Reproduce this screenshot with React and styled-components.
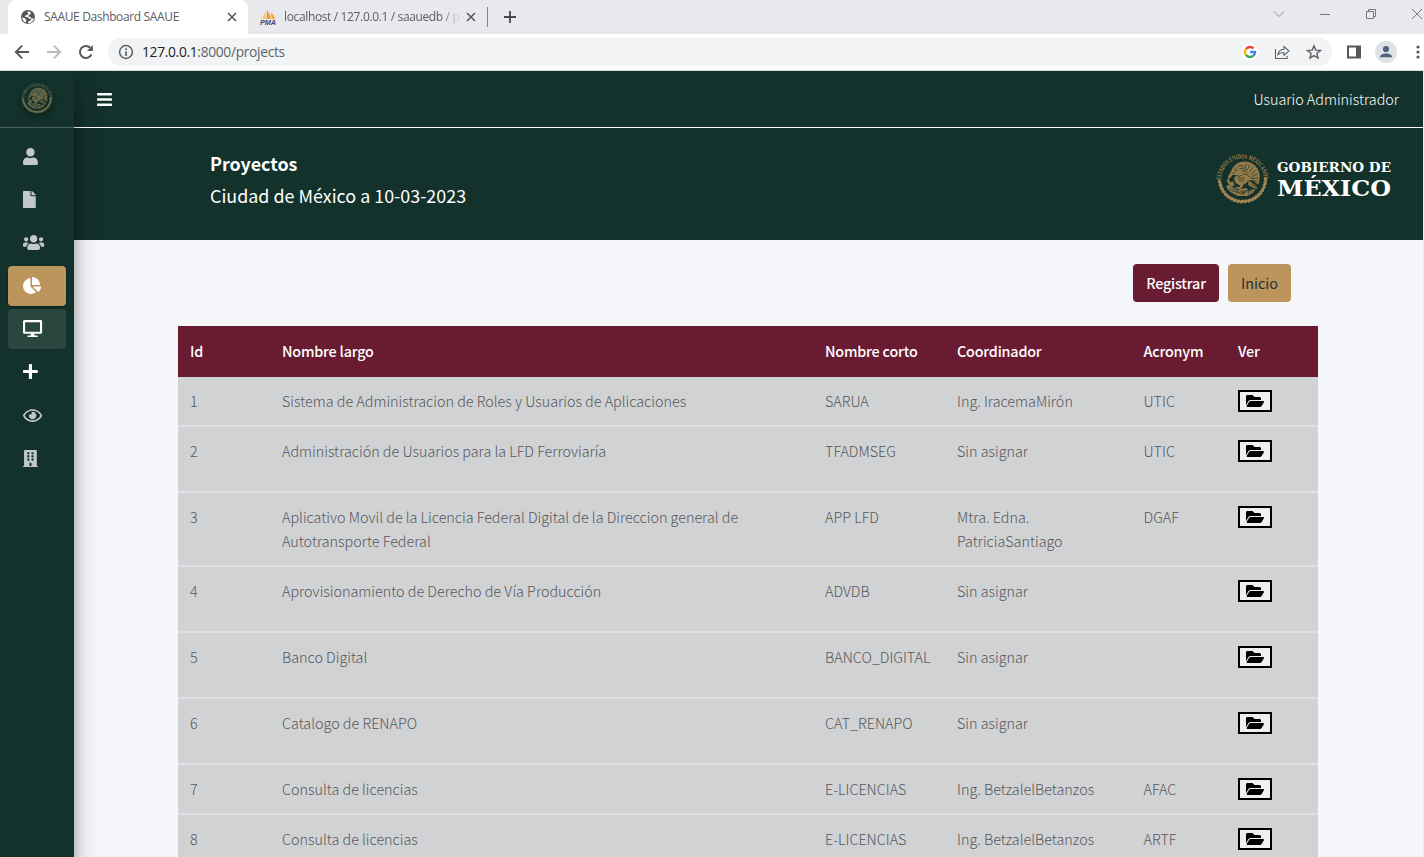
import React from "react";
import styled, { createGlobalStyle } from "styled-components";
import {
  FaUser, FaFile, FaUsers, FaChartPie, FaDesktop, FaPlus, FaRegEye,
  FaBuilding, FaBars, FaFolderOpen,
} from "react-icons/fa";

const green = "#13322b";
const wine = "#691b31";
const gold = "#bc955c";

const Global = createGlobalStyle`
  *, *::before, *::after { box-sizing: border-box; }
  html, body { margin: 0; padding: 0; height: 857px; overflow: hidden; background: #f4f6f9; }
  body { font-family: "Noto Sans CJK SC", "Noto Sans", sans-serif; font-size: 14.35px; font-weight: 300; line-height: 24px; color: #212529; }
  button { font: inherit; border: 0; padding: 0; margin: 0; background: none; color: inherit; }
`;

const Window = styled.div`
  width: 1424px;
  height: 857px;
  display: flex;
  flex-direction: column;
  overflow: hidden;
`;

/* ---------- browser chrome ---------- */
const TabStrip = styled.div`
  height: 34px;
  flex: none;
  display: flex;
  background: #e8e9ed;
  font-family: "Open Sans", sans-serif;
  font-weight: 400;
  font-size: 12px;
  color: #5a5d62;
  padding-left: 8px;
`;
const Tab = styled.div`
  width: ${(p) => p.$w}px;
  height: 34px;
  display: flex;
  align-items: center;
  padding: 0 10px 0 12px;
  background: ${(p) => (p.$active ? "#fff" : "transparent")};
  border-radius: 8px 8px 0 0;
  white-space: nowrap;
`;
const TabTitle = styled.span`
  flex: 1;
  min-width: 0;
  margin: 0 0 0 8px;
  letter-spacing: ${(p) => p.$ls || 0}px;
  ${(p) => p.$fade && "mask-image: linear-gradient(90deg, #000 calc(100% - 24px), rgba(0,0,0,.15) calc(100% - 8px));"}
`;
const TabDivider = styled.i`
  width: 1px;
  height: 20px;
  margin: 7px 16px 0 0;
  background: #808287;
`;
const NewTab = styled.div`
  display: flex;
  align-items: center;
  flex: 1;
`;
const WindowControls = styled.div`
  display: flex;
  align-items: center;
  height: 28px;
  gap: 34px;
  padding-right: 1px;
`;
const Toolbar = styled.div`
  height: 37px;
  flex: none;
  display: flex;
  align-items: center;
  background: #fff;
  border-bottom: 1px solid #d8dddb;
  padding-left: 14px;
  font-family: "Open Sans", sans-serif;
  font-weight: 400;
`;
const NavIcons = styled.div`
  display: flex;
  gap: 16px;
  width: 94px;
`;
const Address = styled.div`
  flex: 1;
  height: 28px;
  display: flex;
  align-items: center;
  border-radius: 14px;
  background: #f1f3f4;
  padding: 0 10px 0 10px;
`;
const Url = styled.span`
  flex: 1;
  margin-left: 8px;
  font-size: 13.8px;
  letter-spacing: -0.32px;
  color: #5f6368;
  b { font-weight: 400; color: #202124; }
`;
const AddressIcons = styled.div`
  display: flex;
  align-items: center;
  gap: 16px;
  svg:first-child { margin-right: -1px; }
`;
const ToolIcons = styled.div`
  display: flex;
  align-items: center;
  gap: 10px;
  padding: 0 1px 0 14px;
  svg:first-child { margin-right: 3px; }
`;

const Svg = ({ s = 16, w, h, vb, children, ...rest }) => (
  <svg width={w || s} height={h || s} viewBox={vb || "0 0 16 16"} fill="none" style={{ flex: "none" }} {...rest}>
    {children}
  </svg>
);
const Close = () => (
  <Svg s={12} vb="0 0 12 12" stroke="#55585d" strokeWidth="1.6"><path d="M2 2l8 8M10 2l-8 8" /></Svg>
);
const Globe = () => (
  <Svg>
    <circle cx="8" cy="8" r="7" fill="#54575c" />
    <path d="M8.300 2.200l-1 1.300 1.200 1.200-1.400 1.300-1.600.3-.6 1.500 3 .4 1 1.300 2.300.3-.4 1.700-2.200.8-.8 2c3 .2 5.600-2 6.100-5l-2.400.2-1.300-1.800-2-.2.6-1.600 1.700-.6.3-1.600c-.7-.9-1.600-1.400-2.500-1.500z" fill="#fff" />
    <path d="M2 8.500l2.500.6 1.700 1.600-.3 2.700C3.800 12.700 2.200 10.700 2 8.500z" fill="#fff" />
  </Svg>
);
const Pma = () => (
  <Svg vb="0 0 16 16">
    <path d="M6 1v9H1.500C3 7.500 5 5 6 1z" fill="#f9c784" />
    <path d="M7 1c2 3 3.500 6 3.500 9H6.600z" fill="#f89c0e" />
    <path d="M11 3c2 2.500 3.500 4.500 4 7h-3.500z" fill="#f6a634" />
    <text x="0" y="15.500" fontSize="6.500" fontWeight="700" fontStyle="italic" fontFamily="Liberation Sans, sans-serif" fill="#3f4370" textLength="16" lengthAdjust="spacingAndGlyphs">PMA</text>
  </Svg>
);
const GoogleG = () => (
  <Svg s={18} vb="0 0 18 18">
    <circle cx="9" cy="9" r="9" fill="#fff" />
    <g strokeWidth="2.300">
      <path d="M5 6a5 5 0 0 1 7.600-.500" stroke="#ea4335" />
      <path d="M5 12a5 5 0 0 1 0-6" stroke="#fbbc05" />
      <path d="M12.300 12.700A5 5 0 0 1 5 12" stroke="#34a853" />
      <path d="M9.200 9h4.900a5 5 0 0 1-1.800 3.700" stroke="#4285f4" />
    </g>
  </Svg>
);

function BrowserChrome() {
  return (
    <>
      <TabStrip>
        <Tab $active $w={240}>
          <Globe />
          <TabTitle $ls={-0.36}>SAAUE Dashboard SAAUE</TabTitle>
          <Close />
        </Tab>
        <Tab $w={239}>
          <Pma />
          <TabTitle $fade $ls={-0.36}>localhost / 127.0.0.1 / saauedb / p</TabTitle>
          <Close />
        </Tab>
        <TabDivider />
        <NewTab>
          <Svg s={12} vb="0 0 12 12" stroke="#45484d" strokeWidth="1.8"><path d="M6 0v12M0 6h12" /></Svg>
        </NewTab>
        <WindowControls>
          <Svg s={12} vb="0 0 12 12" stroke="#8b8d91"><path d="M1 3.500l5 5 5-5" /></Svg>
          <Svg s={12} vb="0 0 12 12" stroke="#77797d"><path d="M1 6.500h10" /></Svg>
          <Svg s={12} vb="0 0 12 12" stroke="#77797d"><path d="M1.500 3.500h7v7h-7zM3.500 3.500v-2h7v7h-2" /></Svg>
          <Svg s={12} vb="0 0 12 12" stroke="#77797d"><path d="M1 1l10 10M11 1L1 11" /></Svg>
        </WindowControls>
      </TabStrip>
      <Toolbar>
        <NavIcons>
          <Svg stroke="#55585d" strokeWidth="1.900"><path d="M15 8H2M8.200 1.600L1.800 8l6.400 6.400" /></Svg>
          <Svg stroke="#b9bbbe" strokeWidth="1.900"><path d="M1 8h13M7.800 1.600L14.200 8l-6.400 6.400" /></Svg>
          <Svg stroke="#55585d" strokeWidth="2"><path d="M13.400 10.500A6 6 0 1 1 12.300 3.800" /><path d="M14.900 1v6H9z" fill="#55585d" stroke="none" /></Svg>
        </NavIcons>
        <Address>
          <Svg stroke="#5f6368" strokeWidth="1.500"><circle cx="8" cy="8" r="6.400" /><path d="M8 7.200V12M8 4.200v1.700" strokeWidth="1.700" /></Svg>
          <Url><b>127.0.0.1</b>:8000/projects</Url>
          <AddressIcons>
            <GoogleG />
            <Svg stroke="#5f6368" strokeWidth="1.100"><path d="M1.500 5v9.500h11.500V12M4 10.500c.5-3.500 2.500-5 6-5.200V2.500l5 4.500-5 4.300V8.500c-2.500 0-4.500.4-6 2z" /></Svg>
            <Svg stroke="#5f6368" strokeWidth="1.400"><path d="M8 1.800l1.800 4.300 4.700.4-3.600 3 1.100 4.500L8 11.600 4 14l1.100-4.500-3.600-3 4.700-.4z" /></Svg>
          </AddressIcons>
        </Address>
        <ToolIcons>
          <Svg><path d="M2 2.500h12v11H2z" stroke="#55585d" strokeWidth="2" /><path d="M10 2h4v12h-4z" fill="#55585d" /></Svg>
          <Svg s={22} vb="0 0 22 22"><circle cx="11" cy="11" r="11" fill="#dee1e6" /><circle cx="11" cy="8" r="3.100" fill="#50607a" /><path d="M5 16.300c0-5 12-5 12 0z" fill="#50607a" /></Svg>
          <Svg><g fill="#55585d"><circle cx="11" cy="3" r="1.600" /><circle cx="11" cy="8" r="1.600" /><circle cx="11" cy="13" r="1.600" /></g></Svg>
        </ToolIcons>
      </Toolbar>
    </>
  );
}

/* ---------- national seal ---------- */
function Seal({ size, color }) {
  const leaves = [];
  for (let a = 2; a <= 180; a += 8.9) {
    const r = (a * Math.PI) / 180;
    const x = 50 + 43.5 * Math.cos(r);
    const y = 50 + 43.5 * Math.sin(r);
    leaves.push(<ellipse key={a} cx={x} cy={y} rx="4.600" ry="3" transform={`rotate(${a + 60} ${x} ${y})`} />);
  }
  return (
    <svg width={size} height={size} viewBox="0 0 100 100" fill={color}>
      <defs><path id="seal-arc" d="M9.500 53a40.500 40.500 0 0 1 81 0" /></defs>
      <text fontFamily="Liberation Serif, serif" fontWeight="700" fontSize="13">
        <textPath href="#seal-arc" textLength="125" lengthAdjust="spacingAndGlyphs">ESTADOS UNIDOS MEXICANOS</textPath>
      </text>
      {leaves}
      {/* eagle: raised wing, head, breast */}
      <path d="M30 33c4-9 13-15 24-15 13 0 23 8 27 19 2 7 2 16-1 25l-9-7-8-2-9 8-8 3-9-5-3-9 4-6-6-1-6 7-3-4z" opacity=".88" />
      {/* tail and claws */}
      <path d="M62 54l13 9 4 6-9-1-10-6zM33 55l-9 3 2 8 8-2zM46 62l-3 8 6-2 3-6z" opacity=".8" />
      {/* nopal, rock and water */}
      <path d="M20 64q5-4 8 2l7 2 6-3 7 5 9-2 6 4 12-3-5 8-11 6H41l-12-6-8-7z" opacity=".85" />
      <g fill="none" stroke={green} strokeWidth="1.300">
        <path d="M41 27q8-4 12 2M44 32q9-4 14 3M48 36q8-3 13 5M51 41q8-1 13 7M58 22l-4 9M64 24l-5 10M70 28l-7 10M75 34l-9 9M79 41l-12 6M80 49l-14 1M79 56l-12-3" />
        <path d="M34 34l6 1M38 44q6 4 11 0M41 49q6 4 12-1M43 54q6 3 11-2M31 40l5-1M36 29l3 3" />
        <path d="M24 69q6 5 11 1t11 3 12 0 12-1M31 75q6-4 11 1t12-1 13 0M40 70v9M51 72v9M61 71v8M37 59l8 5M52 60l6 6M67 61l8 5" />
      </g>
      <path d="M26 45q-6 8 1 13M21 53q2 7 8 8" fill="none" stroke={color} strokeWidth="2" />
    </svg>
  );
}

/* ---------- application ---------- */
const AppFrame = styled.div`
  flex: 1;
  display: flex;
  min-height: 0;
  border-right: 1px solid #e9ecec;
`;
const Sidebar = styled.aside`
  width: 74px;
  flex: none;
  background: ${green};
  position: relative;
  z-index: 2;
  box-shadow: 0 14px 28px rgba(0, 0, 0, 0.25), 0 10px 10px rgba(0, 0, 0, 0.22);
  clip-path: inset(0 -60px 0 0);
`;
const Brand = styled.div`
  height: 57px;
  padding: 11px 0 0 21px;
  border-bottom: 1px solid #4b6059;
  svg { display: block; border-radius: 50%; box-shadow: 0 4px 7px rgba(0, 0, 0, 0.3); }
`;
const Menu = styled.nav`
  display: flex;
  flex-direction: column;
  gap: 3.200px;
  padding: 8px;
`;
const MenuItem = styled.button`
  height: 40px;
  display: flex;
  align-items: center;
  padding-left: 15px;
  border-radius: 4px;
  color: ${(p) => (p.$bright ? "#fff" : "#c2c7d0")};
  background: ${(p) => p.$bg || "transparent"};
  ${(p) => p.$raised && "box-shadow: 0 1px 3px rgba(0,0,0,.12), 0 1px 2px rgba(0,0,0,.24);"}
  svg { height: 17px; width: ${(p) => p.$w}px; }
`;
const Main = styled.main`
  flex: 1;
  min-width: 0;
  background: #f4f6f9;
`;
const TopBar = styled.header`
  height: 57px;
  display: flex;
  align-items: center;
  justify-content: space-between;
  padding: 0 24px 0 23px;
  background: ${green};
  border-bottom: 1px solid #fff;
  color: #fff;
  svg { display: block; width: 15px; height: 17px; }
`;
const Hero = styled.section`
  height: 112px;
  display: flex;
  justify-content: space-between;
  padding: 19px 32px 0 136px;
  background: ${green};
  color: #fff;
  font-size: 17.9px;
  line-height: 32px;
`;
const HeroTitle = styled.div`font-weight: 700;`;
const HeroDate = styled.div`font-weight: 400;`;
const Logo = styled.div`
  display: flex;
  padding-top: 5px;
  gap: 8px;
`;
const Actions = styled.div`
  display: flex;
  justify-content: flex-end;
  gap: 9px;
  padding: 24px 132px 24px 0;
`;
const ActionButton = styled.button`
  width: ${(p) => p.$w}px;
  height: 38px;
  border-radius: 4px;
  background: ${(p) => p.$bg};
  color: ${(p) => p.$fg};
  font-weight: ${(p) => p.$weight};
  letter-spacing: ${(p) => p.$ls || 0}px;
`;
const Table = styled.div`
  width: 1140px;
  margin-left: 104px;
`;
const Row = styled.div`
  display: grid;
  grid-template-columns: 92px 543px 132px 186.500px 94.500px 92px;
  height: ${(p) => p.$h}px;
  background: #d1d2d4;
  border-bottom: 2px solid #dfe1e5;
  color: #55575b;
`;
const HeadRow = styled(Row)`
  background: ${wine};
  border-bottom: 0;
  padding-top: 1px;
  color: #fff;
  font-weight: 500;
  letter-spacing: -0.2px;
`;
const Cell = styled.div`
  padding: 12px 0 0 12px;
  white-space: pre-line;
`;
const OpenButton = styled.button`
  width: 34px;
  height: 22px;
  display: flex;
  align-items: center;
  justify-content: center;
  margin-top: 1px;
  border: 2px solid #000;
  background: #efefef;
  color: #000;
  svg { width: 18px; height: 16px; }
`;

const menu = [
  { Icon: FaUser, w: 15.4 }, { Icon: FaFile, w: 13.2 }, { Icon: FaUsers, w: 22 },
  { Icon: FaChartPie, w: 19, bg: gold, bright: true, raised: true },
  { Icon: FaDesktop, w: 19.8, bg: "#2b463f", bright: true },
  { Icon: FaPlus, w: 15.4, bright: true },
  { Icon: FaRegEye, w: 19.8 }, { Icon: FaBuilding, w: 15.4 },
];

const projects = [
  [50, "Sistema de Administracion de Roles y Usuarios de Aplicaciones", "SARUA", "Ing. IracemaMirón", "UTIC"],
  [66, "Administración de Usuarios para la LFD Ferroviaría", "TFADMSEG", "Sin asignar", "UTIC"],
  [74, "Aplicativo Movil de la Licencia Federal Digital de la Direccion general de\nAutotransporte Federal", "APP LFD", "Mtra. Edna.\nPatriciaSantiago", "DGAF"],
  [66, "Aprovisionamiento de Derecho de Vía Producción", "ADVDB", "Sin asignar", ""],
  [66, "Banco Digital", "BANCO_DIGITAL", "Sin asignar", ""],
  [66, "Catalogo de RENAPO", "CAT_RENAPO", "Sin asignar", ""],
  [50, "Consulta de licencias", "E-LICENCIAS", "Ing. BetzalelBetanzos", "AFAC"],
  [50, "Consulta de licencias", "E-LICENCIAS", "Ing. BetzalelBetanzos", "ARTF"],
];

export default function App() {
  return (
    <Window>
      <Global />
      <BrowserChrome />
      <AppFrame>
        <Sidebar>
          <Brand><Seal size={32} color="#75704c" /></Brand>
          <Menu>
            {menu.map(({ Icon, w, bg, bright, raised }, i) => (
              <MenuItem key={i} $bg={bg} $bright={bright} $raised={raised} $w={w}>
                <Icon preserveAspectRatio="xMinYMid meet" />
              </MenuItem>
            ))}
          </Menu>
        </Sidebar>
        <Main>
          <TopBar>
            <FaBars />
            <span>Usuario Administrador</span>
          </TopBar>
          <Hero>
            <div>
              <HeroTitle>Proyectos</HeroTitle>
              <HeroDate>Ciudad de México a 10-03-2023</HeroDate>
            </div>
            <Logo>
              <Seal size={53} color="#a5854f" />
              <svg width="114" height="54" viewBox="0 0 114 54" fill="#fff" fontFamily="DejaVu Serif, serif" fontWeight="700">
                <text x="0" y="20" fontSize="13.500" textLength="114" lengthAdjust="spacingAndGlyphs">GOBIERNO DE</text>
                <text x="0" y="43.500" fontSize="21.500" textLength="114" lengthAdjust="spacingAndGlyphs">MÉXICO</text>
              </svg>
            </Logo>
          </Hero>
          <Actions>
            <ActionButton $w={86} $bg={wine} $fg="#fff" $weight={500} $ls={-0.2}>Registrar</ActionButton>
            <ActionButton $w={63} $bg={gold} $fg="#1f2d3d" $weight={400}>Inicio</ActionButton>
          </Actions>
          <Table>
            <HeadRow $h={51}>
              {["Id", "Nombre largo", "Nombre corto", "Coordinador", "Acronym", "Ver"].map((t) => <Cell key={t}>{t}</Cell>)}
            </HeadRow>
            {projects.map(([h, ...cells], i) => (
              <Row key={i} $h={h}>
                <Cell>{i + 1}</Cell>
                {cells.map((t, j) => <Cell key={j}>{t}</Cell>)}
                <Cell><OpenButton><FaFolderOpen /></OpenButton></Cell>
              </Row>
            ))}
          </Table>
        </Main>
      </AppFrame>
    </Window>
  );
}
